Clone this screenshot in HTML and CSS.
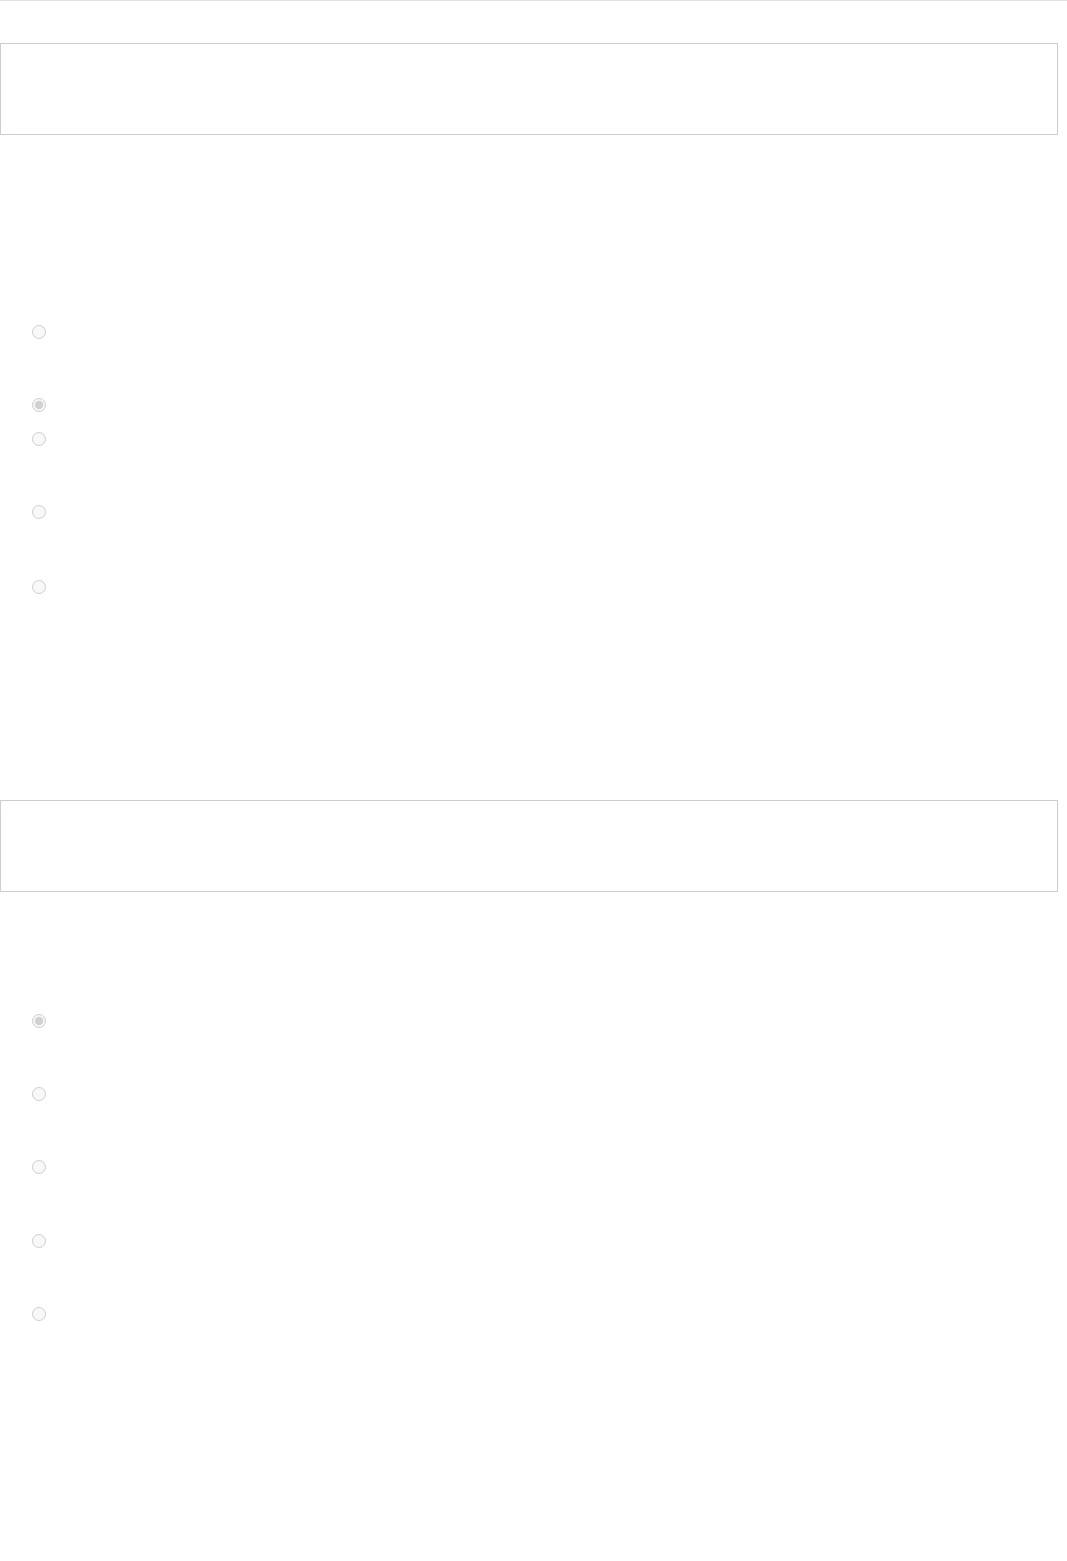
FILE: index.html
```html
<!DOCTYPE html>
<html lang="en">
<head>
 <meta charset="UTF-8">
 <meta name="viewport" content="width=device-width, initial-scale=1.0">
 <title>Survey</title>
 <link rel="stylesheet" href="styles.css">
</head>
<body>
 <div class="topline"></div>
 <section class="question first">
 <div class="panel"></div>
 <div class="options options-one">
 <label class="option tall"><input type="radio" name="q1" disabled></label>
 <label class="option short"><input type="radio" name="q1" checked disabled></label>
 <label class="option tall"><input type="radio" name="q1" disabled></label>
 <label class="option tall2"><input type="radio" name="q1" disabled></label>
 <label class="option"><input type="radio" name="q1" disabled></label>
 </div>
 </section>
 <section class="question second">
 <div class="panel"></div>
 <div class="options options-two">
 <label class="option tall"><input type="radio" name="q2" checked disabled></label>
 <label class="option tall"><input type="radio" name="q2" disabled></label>
 <label class="option tall3"><input type="radio" name="q2" disabled></label>
 <label class="option tall"><input type="radio" name="q2" disabled></label>
 <label class="option"><input type="radio" name="q2" disabled></label>
 </div>
 </section>
</body>
</html>
```

FILE: styles.css
```css
body {
margin: 0;
padding: 0;
font-family: 'Liberation Sans', Arial, sans-serif;
background-color: #fff;
}
.topline {
height: 1px;
background-color: #e0e3e7;
}
.panel {
box-sizing: border-box;
width: 1058px;
height: 92px;
border: 1px solid #c9cfd8;
background-color: #fff;
}
.first {
padding-top: 42px;
}
.second {
padding-top: 206px;
}
.options {
display: flex;
flex-direction: column;
padding-left: 32px;
}
.options-one {
padding-top: 190px;
}
.options-two {
padding-top: 122px;
}
.option {
display: block;
height: 14px;
}
.option input {
display: block;
margin: 0;
width: 14px;
height: 14px;
}
.option.tall {
height: 73px;
}
.option.tall2 {
height: 75px;
}
.option.tall3 {
height: 74px;
}
.option.short {
height: 34px;
}
```
